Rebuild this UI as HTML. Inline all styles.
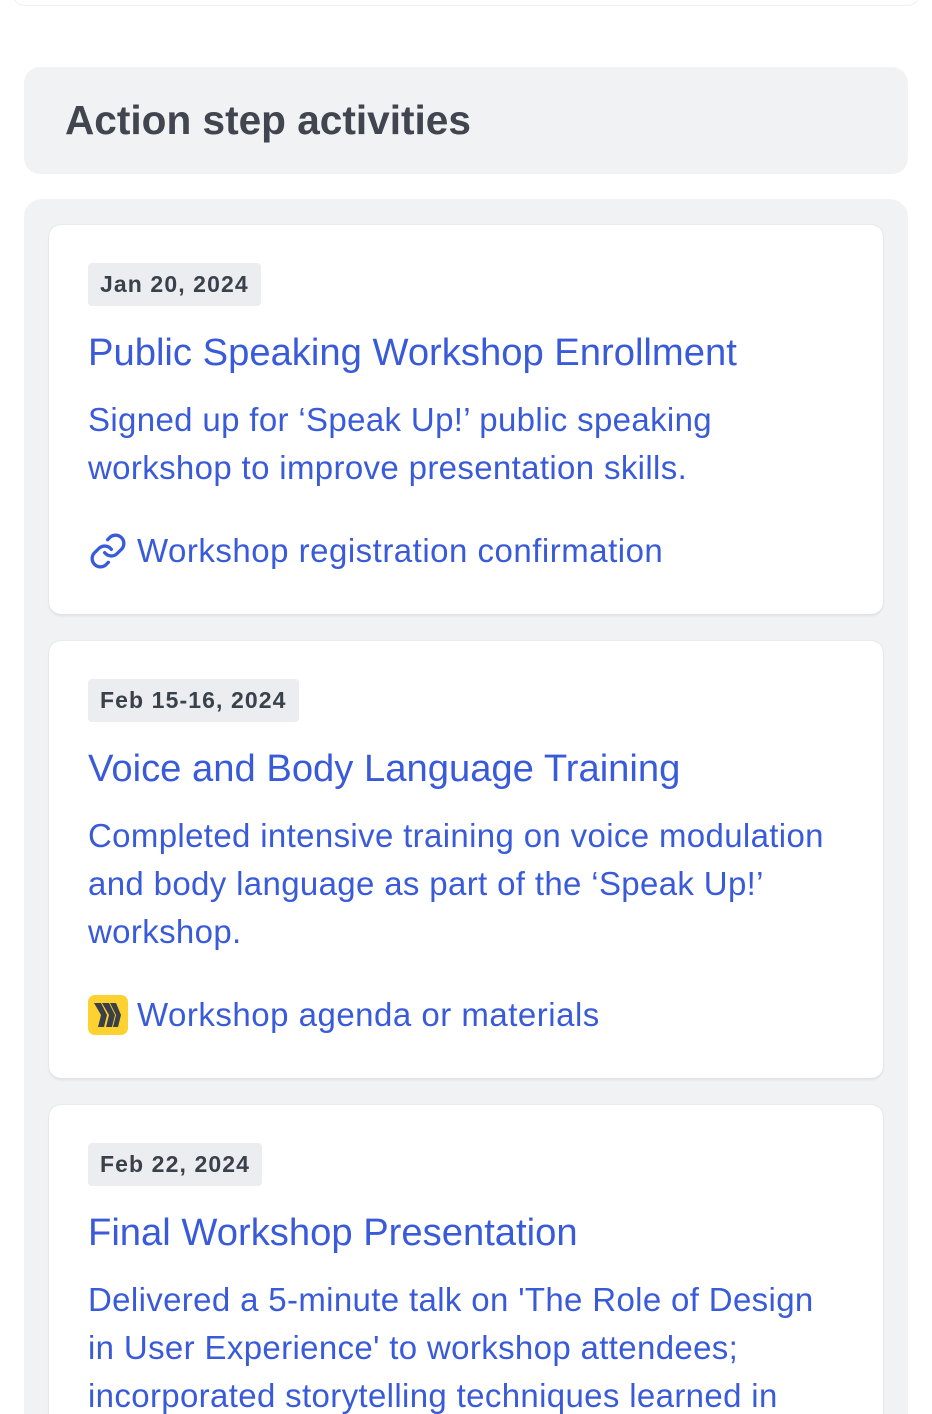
<!DOCTYPE html>
<html><head><meta charset="utf-8"><style>
*{margin:0;padding:0;box-sizing:border-box}
html,body{width:932px;height:1414px;overflow:hidden}
body{background:#fff;font-family:"Liberation Sans",sans-serif;position:relative}
.top{position:absolute;left:12px;top:-20px;width:908px;height:26px;border:1px solid #eef0f2;border-radius:14px}
.hdr{position:absolute;left:24px;top:67px;width:884px;height:107px;background:#f1f2f4;border-radius:16px}
.hdr h1{position:absolute;left:41px;top:30px;font-size:40.6px;font-weight:bold;color:#40454f}
.wrap{position:absolute;left:24px;top:199px;width:884px;height:1215px;background:#f1f2f4;border-radius:18px 18px 0 0;overflow:hidden}
.card{position:absolute;left:25px;width:834px;background:#fff;border-radius:12px;box-shadow:0 2px 2px #dfe1e5,0 0 0 1px #e8eaed}
.chip{position:absolute;left:39px;height:43px;background:#ebedf0;border-radius:4px;font-size:23px;letter-spacing:1.1px;font-weight:bold;color:#3b414b;padding:0 12px;line-height:43px}
.t{position:absolute;left:39px;font-size:38.2px;color:#3a5bd9;white-space:nowrap}
.d{position:absolute;left:39px;width:800px;font-size:33px;letter-spacing:0.35px;line-height:48px;color:#3a5bd9;white-space:nowrap}
.l{position:absolute;left:39px;font-size:33px;letter-spacing:0.5px;color:#3a5bd9;white-space:nowrap;display:flex;align-items:center}
.l svg{margin-right:9px}
</style></head><body>
<div class="top"></div>
<div class="hdr"><h1>Action step activities</h1></div>
<div class="wrap">
 <div class="card" style="top:26px;height:389px">
  <div class="chip" style="top:38px">Jan 20, 2024</div>
  <div class="t" style="top:106px">Public Speaking Workshop Enrollment</div>
  <div class="d" style="top:171px">Signed up for ‘Speak Up!’ public speaking<br>workshop to improve presentation skills.</div>
  <div class="l" style="top:306px"><svg width="40" height="40" viewBox="0 0 24 24" fill="none" stroke="#3a5bd9" stroke-width="2" stroke-linecap="round"><path d="M10 13a5 5 0 0 0 7.5.5l3-3a5 5 0 0 0-7-7l-1.7 1.7"/><path d="M14 11a5 5 0 0 0-7.5-.5l-3 3a5 5 0 0 0 7 7l1.7-1.7"/></svg>Workshop registration confirmation</div>
 </div>
 <div class="card" style="top:442px;height:437px">
  <div class="chip" style="top:38px">Feb 15-16, 2024</div>
  <div class="t" style="top:106px">Voice and Body Language Training</div>
  <div class="d" style="top:171px">Completed intensive training on voice modulation<br>and body language as part of the ‘Speak Up!’<br>workshop.</div>
  <div class="l" style="top:354px"><svg width="40" height="40" viewBox="0 0 40 40"><rect width="40" height="40" rx="7" fill="#fdd130"/><path d="M9 8h7l6 12-3 12h-6l3-12z M17 8h7l6 12-3 12h-6l3-12z M25 8h6l5 12-3 12h-5l3-12z" fill="#3b3f48" transform="translate(-3 0)"/></svg>Workshop agenda or materials</div>
 </div>
 <div class="card" style="top:906px;height:500px">
  <div class="chip" style="top:38px">Feb 22, 2024</div>
  <div class="t" style="top:106px">Final Workshop Presentation</div>
  <div class="d" style="top:171px">Delivered a 5-minute talk on 'The Role of Design<br>in User Experience' to workshop attendees;<br>incorporated storytelling techniques learned in</div>
 </div>
</div>
</body></html>
